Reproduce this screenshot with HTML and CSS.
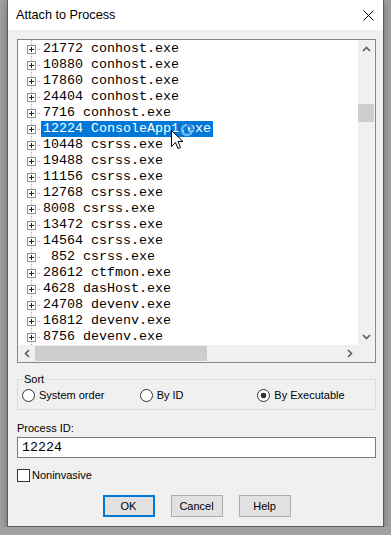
FILE: index.html
```html
<!DOCTYPE html>
<html lang="en">
<head>
  <meta charset="UTF-8">
  <title>Attach to Process</title>
  <link rel="stylesheet" href="styles.css">
</head>
<body>
  <div class="dialog">
    <div class="titlebar">
      <span class="title">Attach to Process</span>
      <svg class="close" width="11" height="11" viewBox="0 0 11 11">
        <path d="M0.5 0.5 L10.5 10.5 M10.5 0.5 L0.5 10.5" stroke="#000" stroke-width="1" fill="none"/>
      </svg>
    </div>

    <div class="content">
      <div class="tree">
        <div class="rows">
          <div class="row"><span class="exp"></span><span class="stub"></span><span class="name">21772 conhost.exe</span></div>
          <div class="row"><span class="exp"></span><span class="stub"></span><span class="name">10880 conhost.exe</span></div>
          <div class="row"><span class="exp"></span><span class="stub"></span><span class="name">17860 conhost.exe</span></div>
          <div class="row"><span class="exp"></span><span class="stub"></span><span class="name">24404 conhost.exe</span></div>
          <div class="row"><span class="exp"></span><span class="stub"></span><span class="name">7716 conhost.exe</span></div>
          <div class="row sel"><span class="exp"></span><span class="stub"></span><span class="name">12224 ConsoleApp1.exe</span>
            <!-- busy ring + mouse pointer over the selection -->
            <svg class="busy" width="16" height="16" viewBox="0 0 16 16">
              <circle cx="8" cy="8" r="5" stroke="#6db6f7" stroke-width="2.5" fill="none"/>
              <path d="M8 3 A5 5 0 0 1 13 8" stroke="#2c7fd0" stroke-width="2.5" fill="none"/>
            </svg>
            <svg class="pointer" width="13" height="20" viewBox="0 0 13 20">
              <path d="M0.5 0.5 L0.5 16.5 L4.5 12.5 L7 18.5 L9.5 17.5 L7 11.5 L12 11.5 Z" fill="#fff" stroke="#000" stroke-width="1" stroke-linejoin="miter"/>
            </svg>
          </div>
          <div class="row"><span class="exp"></span><span class="stub"></span><span class="name">10448 csrss.exe</span></div>
          <div class="row"><span class="exp"></span><span class="stub"></span><span class="name">19488 csrss.exe</span></div>
          <div class="row"><span class="exp"></span><span class="stub"></span><span class="name">11156 csrss.exe</span></div>
          <div class="row"><span class="exp"></span><span class="stub"></span><span class="name">12768 csrss.exe</span></div>
          <div class="row"><span class="exp"></span><span class="stub"></span><span class="name">8008 csrss.exe</span></div>
          <div class="row"><span class="exp"></span><span class="stub"></span><span class="name">13472 csrss.exe</span></div>
          <div class="row"><span class="exp"></span><span class="stub"></span><span class="name">14564 csrss.exe</span></div>
          <div class="row"><span class="exp"></span><span class="stub"></span><span class="name"> 852 csrss.exe</span></div>
          <div class="row"><span class="exp"></span><span class="stub"></span><span class="name">28612 ctfmon.exe</span></div>
          <div class="row"><span class="exp"></span><span class="stub"></span><span class="name">4628 dasHost.exe</span></div>
          <div class="row"><span class="exp"></span><span class="stub"></span><span class="name">24708 devenv.exe</span></div>
          <div class="row"><span class="exp"></span><span class="stub"></span><span class="name">16812 devenv.exe</span></div>
          <div class="row"><span class="exp"></span><span class="stub"></span><span class="name">8756 devenv.exe</span></div>
        </div>

        <div class="vscroll">
          <div class="sb-btn">
            <svg width="9" height="6" viewBox="0 0 9 6"><path d="M1 5 L4.5 1.5 L8 5" stroke="#606060" stroke-width="1.7" fill="none"/></svg>
          </div>
          <div class="sb-track"><div class="vthumb"></div></div>
          <div class="sb-btn">
            <svg width="9" height="6" viewBox="0 0 9 6"><path d="M1 1 L4.5 4.5 L8 1" stroke="#606060" stroke-width="1.7" fill="none"/></svg>
          </div>
        </div>

        <div class="hscroll">
          <div class="sb-btn">
            <svg width="6" height="9" viewBox="0 0 6 9"><path d="M5 1 L1.5 4.5 L5 8" stroke="#606060" stroke-width="1.7" fill="none"/></svg>
          </div>
          <div class="sb-track"><div class="hthumb"></div></div>
          <div class="sb-btn">
            <svg width="6" height="9" viewBox="0 0 6 9"><path d="M1 1 L4.5 4.5 L1 8" stroke="#606060" stroke-width="1.7" fill="none"/></svg>
          </div>
        </div>

        <div class="corner"></div>
      </div>

      <fieldset class="sort">
        <legend>Sort</legend>
        <div class="options">
          <label class="radio"><span class="circle"></span>System order</label>
          <label class="radio"><span class="circle"></span>By ID</label>
          <label class="radio"><span class="circle on"></span>By Executable</label>
        </div>
      </fieldset>

      <div class="pid-label">Process ID:</div>
      <div class="pid-input">12224</div>

      <label class="check"><span class="box"></span>Noninvasive</label>

      <div class="buttons">
        <button class="default">OK</button>
        <button>Cancel</button>
        <button>Help</button>
      </div>
    </div>
  </div>
</body>
</html>
```

FILE: styles.css
```css
* {
  box-sizing: border-box;
}
body {
  margin: 0;
  background: #a2a2a2;
  font-family: "Liberation Sans", Arial, sans-serif;
  font-size: 11px;
  line-height: 13px;
  color: #000;
}

.dialog {
  width: 377px;
  margin-left: 7px;
  background: #f0f0f0;
  border: 1px solid #5c5c5c;
  border-top: none;
  box-shadow: 0 2px 8px rgba(0,0,0,0.35);
}
.titlebar {
  height: 30px;
  background: #fff;
  display: flex;
  align-items: center;
  justify-content: space-between;
  padding: 0 9px 0 8px;
}
.title {
  font-size: 12.7px;
}

.content {
  padding: 9px 7px 9px 9px;
}

/* process tree */
.tree {
  height: 324px;
  border: 1px solid #828790;
  background: #fff;
  display: grid;
  grid-template-columns: 1fr 17px;
  grid-template-rows: 1fr 17px;
}
.rows {
  overflow: hidden;
  padding-top: 1px;
  font-family: "Liberation Mono", "Courier New", monospace;
  font-size: 13.33px;
  background: repeating-linear-gradient(to bottom, #a0a0a0 0 1px, transparent 1px 2px) 13px 0 / 1px 100% no-repeat;
}
.row {
  height: 16px;
  display: flex;
  align-items: center;
  padding-left: 9px;
}
.exp {
  width: 9px;
  height: 9px;
  flex: none;
  border: 1px solid #919191;
  background:
    linear-gradient(#222, #222) center / 5px 1px no-repeat,
    linear-gradient(#222, #222) center / 1px 5px no-repeat,
    #fff;
}
.stub {
  width: 5px;
  height: 1px;
  flex: none;
  background: repeating-linear-gradient(to right, transparent 0 1px, #a0a0a0 1px 2px);
}
.name {
  height: 16px;
  line-height: 16px;
  padding: 0 2px;
  white-space: pre;
}
.sel {
  position: relative;
}
.sel .name {
  background: #0078d7;
  color: #fff;
}
.busy {
  position: absolute;
  left: 161px;
  top: 1px;
}
.pointer {
  position: absolute;
  left: 153px;
  top: 9px;
}

/* scrollbars */
.vscroll,
.hscroll,
.corner {
  background: #f0f0f0;
}
.vscroll {
  display: flex;
  flex-direction: column;
}
.hscroll {
  display: flex;
}
.sb-btn {
  width: 17px;
  height: 17px;
  flex: none;
  display: flex;
  align-items: center;
  justify-content: center;
}
.sb-track {
  flex: 1;
}
.vthumb {
  margin: 47px 1px 0 0;
  height: 18px;
  background: #cdcdcd;
}
.hthumb {
  margin-top: 1px;
  width: 172px;
  height: 15px;
  background: #cdcdcd;
}

/* sort group */
.sort {
  margin: 10px 0 0;
  border: 1px solid #dcdcdc;
  padding: 3px 0 7px 5px;
  min-width: 0;
}
.sort legend {
  padding: 0 1px;
}
.options {
  display: flex;
  margin-left: -1px;
}
.radio {
  width: 120px;
  display: flex;
  align-items: center;
  gap: 4px;
}
.circle {
  width: 13px;
  height: 13px;
  flex: none;
  border-radius: 50%;
  border: 1px solid #333;
  background: #fff;
}
.circle.on {
  background: radial-gradient(circle, #333 0 2.6px, #fff 3.1px);
}

/* process id */
.pid-label {
  margin-top: 12px;
}
.pid-input {
  margin-top: 2px;
  height: 21px;
  border: 1px solid #7a7a7a;
  background: #fff;
  padding-left: 4px;
  font-family: "Liberation Mono", "Courier New", monospace;
  font-size: 13.33px;
  line-height: 19px;
}

.check {
  margin-top: 11px;
  display: flex;
  align-items: center;
  gap: 2px;
}
.box {
  width: 13px;
  height: 13px;
  border: 1px solid #333;
  background: #fff;
}

.buttons {
  margin-top: 13px;
  display: flex;
  justify-content: center;
  gap: 16px;
}
.buttons button {
  width: 52px;
  height: 22px;
  padding: 0;
  background: #e1e1e1;
  border: 1px solid #adadad;
  font-family: "Liberation Sans", Arial, sans-serif;
  font-size: 11px;
  color: #000;
}
.buttons .default {
  border: 2px solid #0078d7;
}
```
